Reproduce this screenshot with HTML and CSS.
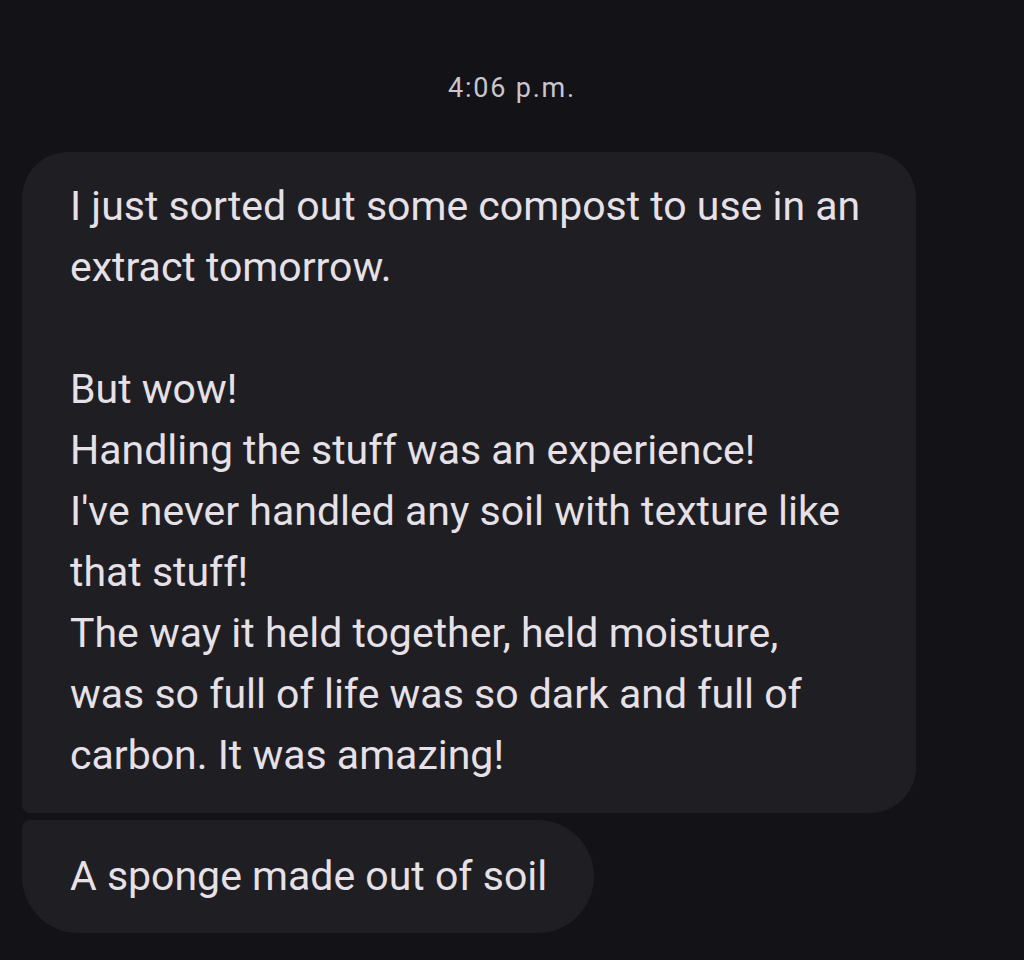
FILE: index.html
```html
<!DOCTYPE html>
<html lang="en">
<head>
<meta charset="utf-8">
<title>Messages</title>
<link rel="stylesheet" href="styles.css">
</head>
<body>
<main class="thread">
  <div class="timestamp">4:06 p.m.</div>
  <div class="group">
    <div class="bubble bubble-first">I just sorted out some compost to use in an<br>extract tomorrow.<br><br>But wow!<br>Handling the stuff was an experience!<br>I've never handled any soil with texture like<br>that stuff!<br>The way it held together, held moisture,<br>was so full of life was so dark and full of<br>carbon. It was amazing!</div>
    <div class="bubble bubble-last">A sponge made out of soil</div>
  </div>
</main>
</body>
</html>
```

FILE: styles.css
```css
html, body {
  margin: 0;
  padding: 0;
  background: #131217;
}
body {
  width: 1024px;
  height: 960px;
  overflow: hidden;
  font-family: Roboto, "Noto Sans", sans-serif;
  color: #e6e1e8;
}
.thread {
  display: flex;
  flex-direction: column;
  padding: 70px 0 0 22px;
}
.timestamp {
  align-self: center;
  margin-left: -22px;
  font-size: 27px;
  letter-spacing: 1.8px;
  line-height: 36px;
  color: #c9c5cd;
  margin-bottom: 46px;
}
.group {
  display: flex;
  flex-direction: column;
  align-items: flex-start;
  gap: 7px;
}
.bubble {
  background: #1f1e23;
  font-size: 41px;
  line-height: 61px;
  padding: 24px 48px 27px 48px;
  white-space: nowrap;
}
.bubble-first {
  width: 798px;
  border-radius: 46px 46px 46px 8px;
}
.bubble-last {
  padding: 26px 47px 26px 48px;
  border-radius: 8px 57px 57px 57px;
}
```
